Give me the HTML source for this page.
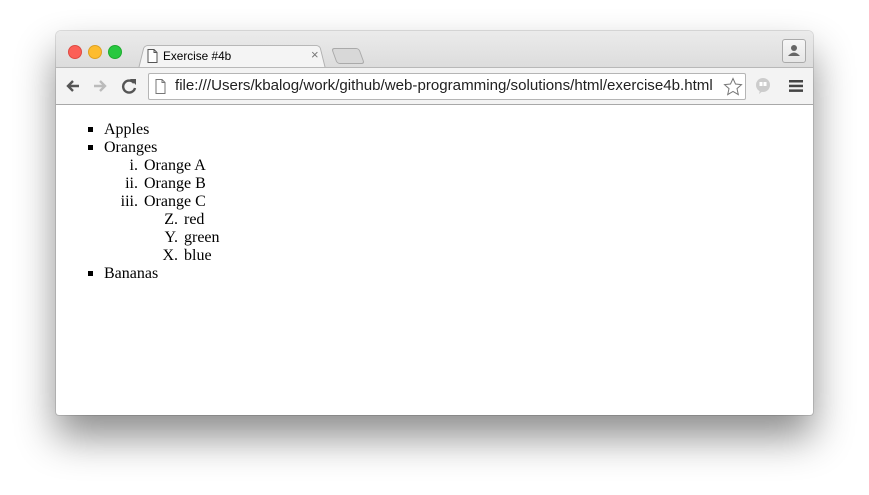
<!DOCTYPE html>
<html><head><meta charset="utf-8"><style>
body{margin:0;width:869px;height:495px;background:#fff;position:relative;overflow:hidden;font-family:"Liberation Sans",sans-serif}
.win{position:absolute;left:56px;top:31px;width:757px;height:384px;border-radius:5px 5px 3px 3px;background:#fff;box-shadow:0 22px 40px rgba(0,0,0,.45),0 0 0 1px rgba(0,0,0,.12);overflow:hidden}
.tabs{position:absolute;left:0;top:0;width:757px;height:37px;background:linear-gradient(#ebebeb,#dcdcdc)}
.tb{position:absolute;left:0;top:36px;width:757px;height:36px;background:#f3f3f3;border-top:1px solid #b8b8b8;border-bottom:1px solid #a8a8a8}
.dot{position:absolute;top:14px;width:12px;height:12px;border-radius:50%}
.tab{position:absolute;left:82px;top:12px;width:186px;height:25px;background:#f4f4f4;border:1px solid #b0b0b0;border-bottom:none;border-radius:4px 4px 0 0;transform:perspective(80px) rotateX(12deg);transform-origin:bottom}
.nt{position:absolute;left:278px;top:17px;width:26px;height:14px;background:#d8d8d8;border:1px solid #aaa;border-radius:3px;transform:skewX(20deg)}
.url{position:absolute;left:92px;top:5px;width:596px;height:25px;background:#fff;border:1px solid #b5b5b5;border-radius:2px}
.t{position:absolute;font-family:"Liberation Serif",serif;font-size:16px;line-height:18px;color:#000;white-space:nowrap}
.b{position:absolute;width:5px;height:5px;background:#000}
.r{text-align:right;width:40px}
</style></head><body>
<div class="win">
 <div class="tabs">
  <div class="dot" style="left:12px;background:#fc5f57;border:0.5px solid #de4a42"></div>
  <div class="dot" style="left:32px;background:#fdbc2e;border:0.5px solid #dea123"></div>
  <div class="dot" style="left:52px;background:#28c840;border:0.5px solid #1eab2f"></div>
  <div class="tab"></div>
  <div class="nt"></div>
  <svg style="position:absolute;left:91px;top:18px" width="11" height="14"><path d="M1 .5h6l3 3v10H1z M7 .5v3h3" fill="#fff" stroke="#555"/></svg>
  <div style="position:absolute;left:107px;top:18px;font-size:11.8px;color:#000">Exercise #4b</div>
  <div style="position:absolute;left:255px;top:16px;font-size:13px;color:#777">×</div>
  <div style="position:absolute;left:726px;top:8px;width:22px;height:22px;border:1px solid #aaa;border-radius:3px;background:linear-gradient(#f6f6f6,#e6e6e6)">
   <svg width="22" height="22"><circle cx="11" cy="8" r="3" fill="#666"/><path d="M5 16q6-7 12 0z" fill="#666"/></svg>
  </div>
 </div>
 <div class="tb">
  <svg style="position:absolute;left:9px;top:10px" width="16" height="16"><path d="M14 8H3M8 3L3 8l5 5" stroke="#555" stroke-width="2.4" fill="none"/></svg>
  <svg style="position:absolute;left:36px;top:10px" width="16" height="16"><path d="M2 8h11M8 3l5 5-5 5" stroke="#bbb" stroke-width="2.4" fill="none"/></svg>
  <svg style="position:absolute;left:64px;top:9px" width="18" height="18"><path d="M14 6a6 6 0 1 0 1 5" stroke="#555" stroke-width="2.4" fill="none"/><path d="M10 2h6v6z" fill="#555"/></svg>
  <div class="url">
   <svg style="position:absolute;left:6px;top:5px" width="11" height="15"><path d="M1 .5h6l3 3v11H1z M7 .5v3h3" fill="#fff" stroke="#777"/></svg>
   <div style="position:absolute;left:26px;top:3px;font-size:15.1px;color:#222">file:///Users/kbalog/work/github/web-programming/solutions/html/exercise4b.html</div>
   <svg style="position:absolute;left:574px;top:3px" width="20" height="20"><path d="M10 1.5l2.5 5.5 6 .6-4.5 4 1.3 6L10 14.5 4.7 17.6 6 11.6l-4.5-4 6-.6z" fill="none" stroke="#777"/></svg>
  </div>
  <svg style="position:absolute;left:699px;top:9px" width="16" height="18"><circle cx="8" cy="8" r="7" fill="#ccc"/><path d="M5 13l-1 4 5-4z" fill="#ccc"/><rect x="4.5" y="5" width="3" height="4" fill="#fff"/><rect x="8.5" y="5" width="3" height="4" fill="#fff"/></svg>
  <svg style="position:absolute;left:733px;top:12px" width="14" height="12"><rect y="0" width="14" height="2.5" fill="#444"/><rect y="4.7" width="14" height="2.5" fill="#444"/><rect y="9.4" width="14" height="2.5" fill="#444"/></svg>
 </div>
</div>
<div class="b" style="left:88px;top:127px"></div><div class="t" style="left:104px;top:121px">Apples</div>
<div class="b" style="left:88px;top:145px"></div><div class="t" style="left:104px;top:139px">Oranges</div>
<div class="t r" style="left:98px;top:157px">i.</div><div class="t" style="left:144px;top:157px">Orange A</div>
<div class="t r" style="left:98px;top:175px">ii.</div><div class="t" style="left:144px;top:175px">Orange B</div>
<div class="t r" style="left:98px;top:193px">iii.</div><div class="t" style="left:144px;top:193px">Orange C</div>
<div class="t r" style="left:138px;top:211px">Z.</div><div class="t" style="left:184px;top:211px">red</div>
<div class="t r" style="left:138px;top:229px">Y.</div><div class="t" style="left:184px;top:229px">green</div>
<div class="t r" style="left:138px;top:247px">X.</div><div class="t" style="left:184px;top:247px">blue</div>
<div class="b" style="left:88px;top:271px"></div><div class="t" style="left:104px;top:265px">Bananas</div>
</body></html>
